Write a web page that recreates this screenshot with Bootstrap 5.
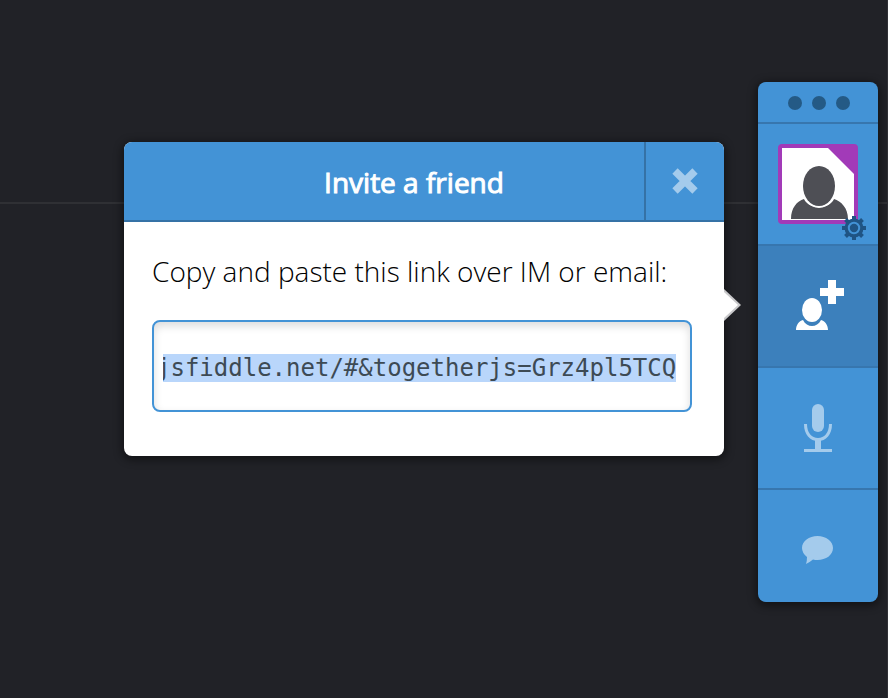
<!DOCTYPE html>
<html lang="en">
<head>
<meta charset="utf-8">
<meta name="viewport" content="width=device-width, initial-scale=1">
<title>Invite a friend</title>
<link href="https://cdn.jsdelivr.net/npm/bootstrap@5.3.0/dist/css/bootstrap.min.css" rel="stylesheet">
<style>
  :root { --blue: #4393d6; --blue-line: #3776ae; --blue-active: #3c80bc; }
  body { background: #212227; font-family: "Open Sans", sans-serif; }
  .stage {
    padding: 82px 9px 0 24px; gap: 34px;
    border-right: 1px solid #2f3035;
    background: linear-gradient(#2f3034, #2f3034) 0 202px / 100% 2px no-repeat;
  }
  .panel { flex: 0 1 600px; min-width: 0; margin-top: 60px; border-radius: 8px; box-shadow: 0 2px 8px 2px rgba(0,0,0,.45); }
  .panel-top { height: 80px; background: var(--blue); border-bottom: 2px solid #3572a6; border-radius: 8px 8px 0 0; color: #fff; }
  .panel-top h1 { font-size: 28px; font-weight: 400; line-height: 40px; padding: 2px 0 0 60px; -webkit-text-stroke: 1px #fff; }
  .close-x { width: 80px; border-left: 2px solid #3572a6 !important; }
  .panel-main { padding: 29px 32px 44px 28px; }
  .panel-main label { font-size: 28px; font-weight: 300; line-height: 40px; color: #000; margin-bottom: 29px; white-space: nowrap; }
  .link-field {
    height: 92px; padding: 4px 14px 0 9px; border: 2px solid var(--blue); border-radius: 8px;
    font: 24px/30px "DejaVu Sans Mono", monospace; color: #3d4a54;
  }
  .link-field, .link-field:focus { color: #3d4a54; border-color: var(--blue); box-shadow: inset 0 4px 8px rgba(0,0,0,.14); }
  .link-field::selection { background: #b9d6fb; color: #3d4a54; }
  .pointer { left: 100%; top: 147px; }
  .dock { width: 120px; background: var(--blue); border-radius: 8px; overflow: hidden; box-shadow: 0 2px 8px 2px rgba(0,0,0,.45); }
  .dock button { border-bottom: 2px solid var(--blue-line) !important; height: 122px; }
  .dock .grip { height: 42px; }
  .dock .active-tool { background: var(--blue-active); }
  .dock .last-tool { height: 112px; border-bottom: 0 !important; }
  svg { display: block; }
</style>
</head>
<body>
<main class="stage min-vh-100 d-flex justify-content-end align-items-start">
  <section class="panel bg-white position-relative" role="dialog" aria-labelledby="invite-title">
    <header class="panel-top d-flex align-items-stretch">
      <h1 id="invite-title" class="flex-grow-1 m-0 d-flex align-items-center justify-content-center">Invite a friend</h1>
      <button type="button" class="close-x bg-transparent border-0 p-0 d-flex align-items-center justify-content-center" aria-label="Close">
        <svg width="26" height="26" viewBox="0 0 26 26" fill="none" stroke="#a4cbec" stroke-width="7.5"><path d="M3 3L23 23M23 3L3 23"/></svg>
      </button>
    </header>
    <div class="panel-main">
      <label for="share-link" class="d-block">Copy and paste this link over IM or email:</label>
      <input id="share-link" class="link-field form-control" type="text" value="jsfiddle.net/#&amp;togetherjs=Grz4pl5TCQ" spellcheck="false" readonly>
    </div>
    <svg class="pointer position-absolute" width="18" height="32" viewBox="0 0 18 32"><path d="M0 0L17 16L0 32Z" fill="#c9c9cb"/><path d="M0 3L14 16L0 29Z" fill="#fff"/></svg>
  </section>

  <nav class="dock flex-shrink-0 d-flex flex-column" aria-label="Collaboration tools">
    <button type="button" class="grip bg-transparent border-0 p-0" aria-label="Move dock">
      <svg width="120" height="40" viewBox="0 0 120 40" fill="#245a85"><circle cx="37" cy="21" r="7"/><circle cx="61" cy="21" r="7"/><circle cx="85" cy="21" r="7"/></svg>
    </button>
    <button type="button" class="bg-transparent border-0 p-0" aria-label="Profile">
      <svg width="120" height="120" viewBox="0 0 120 120">
        <rect x="20" y="20" width="80" height="80" rx="4" fill="#a23ab8"/>
        <path d="M24 24H70L96 50V96H24Z" fill="#fff"/>
        <path d="M33 95C33 84 39 77 46 75C51 86 71 86 76 75C83 77 90 84 90 95Z" fill="#4e4f55"/>
        <ellipse cx="61" cy="62" rx="18" ry="22" fill="#fff"/>
        <ellipse cx="61" cy="62" rx="16" ry="20" fill="#4e4f55"/>
        <g transform="translate(96 104)">
          <g fill="#1f5484"><path d="M-2-12H2V12H-2ZM-12-2H12V2H-12Z"/><path transform="rotate(45)" d="M-2-12H2V12H-2ZM-12-2H12V2H-12Z"/><circle r="9.5"/></g>
          <circle r="5.2" fill="#1f5484" stroke="#4393d6" stroke-width="2"/>
        </g>
      </svg>
    </button>
    <button type="button" class="active-tool border-0 p-0" aria-label="Invite a friend">
      <svg width="120" height="120" viewBox="0 0 120 120" fill="#fff">
        <path d="M70 34H78V42H86V50H78V58H70V50H62V42H70Z"/>
        <ellipse cx="54" cy="64" rx="10" ry="12"/>
        <path d="M38 84C38 79 41 75 45 74C49 82 59 82 63 74C67 75 70 79 70 84Z"/>
      </svg>
    </button>
    <button type="button" class="bg-transparent border-0 p-0" aria-label="Microphone">
      <svg width="120" height="120" viewBox="0 0 120 120" fill="#a4cbec">
        <rect x="54" y="36" width="12" height="28" rx="6"/>
        <path d="M47.5 56C47.500 66 53 71.5 60 71.5S72.5 66 72.5 56" fill="none" stroke="#a4cbec" stroke-width="3"/>
        <path d="M57 72H63V81H74V84H46V81H57Z"/>
      </svg>
    </button>
    <button type="button" class="last-tool bg-transparent border-0 p-0" aria-label="Chat">
      <svg width="120" height="112" viewBox="0 0 120 112" fill="#a4cbec">
        <path d="M59.5 46C68 46 75 51 75 58S68 70 59.5 70Q57 70 55 69.5Q52 72 48 74Q49 71 49 67Q44 63 44 58C44 51 51 46 59.5 46Z"/>
      </svg>
    </button>
  </nav>
</main>
<script src="https://cdn.jsdelivr.net/npm/bootstrap@5.3.0/dist/js/bootstrap.bundle.min.js"></script>
<script>
  const field = document.getElementById('share-link');
  field.focus();
  field.select();
  field.scrollLeft = field.scrollWidth;
</script>
</body>
</html>
